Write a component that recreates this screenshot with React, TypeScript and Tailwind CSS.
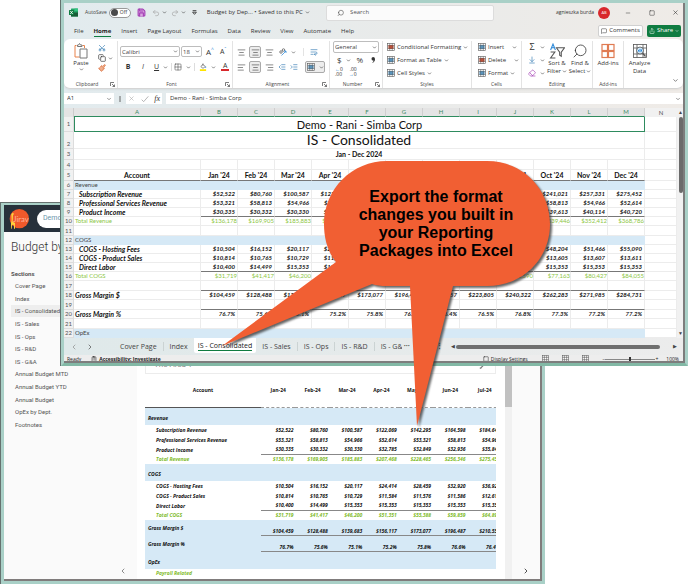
import * as React from "react"
import {
  AlignCenter, AlignLeft, AlignRight, ArrowDownToLine, ChevronDown, ChevronLeft, ChevronRight,
  ClipboardList, Copy, Eraser, Grid2x2, IndentDecrease, IndentIncrease, MessageSquare, Minus,
  Paintbrush, Redo2, Save, Scissors, Search, Share, Square, Undo2, WrapText, X,
} from "lucide-react"

const months = ["Jan", "Feb", "Mar", "Apr", "May", "Jun", "Jul", "Aug", "Sep", "Oct", "Nov", "Dec"]

type RowKind = "section" | "item" | "total" | "blank" | "margin"

interface Row {
  kind: RowKind
  label?: string
  values?: string[]
  line?: boolean
}

const money = (list: string) => list.split(" ").map((n) => "$" + n)
const percent = (list: string) => list.split(" ").map((n) => n + "%")

const subscription = money("52,522 80,760 100,587 122,069 142,295 164,598 184,645 201,340 222,180 241,021 257,331 275,452")
const services = money("53,321 58,813 54,966 52,614 53,321 58,813 54,966 52,614 53,321 58,813 54,966 52,614")
const product = money("30,335 30,332 30,330 32,785 32,849 32,936 35,843 38,120 38,411 39,613 40,114 40,720")
const revenue = money("136,178 169,905 185,883 207,468 228,465 256,346 275,454 292,074 313,912 339,446 352,412 368,786")
const hosting = money("10,504 16,152 20,117 24,414 28,459 32,920 36,929 40,268 44,436 48,204 51,466 55,090")
const productSales = money("10,814 10,765 10,729 11,584 11,576 11,586 12,615 12,648 13,801 13,605 13,607 13,611")
const labor = money("10,400 14,499 15,353 15,353 15,353 15,353 15,353 15,353 15,353 15,353 15,353 15,353")
const cogs = money("31,719 41,417 46,200 51,351 55,388 59,859 64,897 68,269 73,590 77,163 80,427 84,055")
const margin = money("104,459 128,488 139,683 156,117 173,077 196,487 210,557 223,805 240,322 262,283 271,985 284,731")
const marginPct = percent("76.7 75.6 75.1 75.2 75.8 76.6 76.4 76.5 76.8 77.3 77.2 77.2")

const sheetRows: Row[] = [
  { kind: "section", label: "Revenue" },
  { kind: "item", label: "Subscription Revenue", values: subscription },
  { kind: "item", label: "Professional Services Revenue", values: services },
  { kind: "item", label: "Product Income", values: product, line: true },
  { kind: "total", label: "Total Revenue", values: revenue },
  { kind: "blank" },
  { kind: "section", label: "COGS" },
  { kind: "item", label: "COGS - Hosting Fees", values: hosting },
  { kind: "item", label: "COGS - Product Sales", values: productSales },
  { kind: "item", label: "Direct Labor", values: labor, line: true },
  { kind: "total", label: "Total COGS", values: cogs },
  { kind: "blank", line: true },
  { kind: "margin", label: "Gross Margin $", values: margin },
  { kind: "blank", line: true },
  { kind: "margin", label: "Gross Margin %", values: marginPct },
  { kind: "blank" },
  { kind: "section", label: "OpEx" },
]

const reportRows: Row[] = [
  { kind: "section", label: "Revenue" },
  { kind: "item", label: "Subscription Revenue", values: subscription },
  { kind: "item", label: "Professional Services Revenue", values: services },
  { kind: "item", label: "Product Income", values: product, line: true },
  { kind: "total", label: "Total Revenue", values: revenue },
  { kind: "section", label: "COGS" },
  { kind: "item", label: "COGS - Hosting Fees", values: hosting },
  { kind: "item", label: "COGS - Product Sales", values: productSales },
  { kind: "item", label: "Direct Labor", values: labor, line: true },
  { kind: "total", label: "Total COGS", values: cogs },
  { kind: "margin", label: "Gross Margin $", values: margin, line: true },
  { kind: "margin", label: "Gross Margin %", values: marginPct, line: true },
  { kind: "section", label: "OpEx" },
  { kind: "total", label: "Payroll Related" },
]

const sections = [
  "Cover Page", "Index", "IS - Consolidated", "IS - Sales", "IS - Ops", "IS - R&D", "IS - G&A",
  "Annual Budget MTD", "Annual Budget YTD", "Annual Budget", "OpEx by Dept.", "Footnotes",
]

function Caret() {
  return <ChevronDown className="size-[5px] shrink-0 text-[#444]" strokeWidth={3} />
}

interface IconButtonProps {
  label: string
  children: React.ReactNode
  className?: string
}

function IconButton({ label, children, className = "" }: IconButtonProps) {
  return (
    <button type="button" aria-label={label} className={"flex shrink-0 items-center justify-center " + className}>
      {children}
    </button>
  )
}

interface PickerProps {
  label: string
  value: string
  className: string
}

function Picker({ label, value, className }: PickerProps) {
  return (
    <div className={"relative flex items-center rounded-xs border border-[#bdbdbd] bg-white " + className}>
      <select aria-label={label} className="w-full appearance-none bg-transparent pl-px text-[#444] outline-none">
        <option>{value}</option>
      </select>
      <ChevronDown className="pointer-events-none absolute right-px size-[5px] text-[#444]" strokeWidth={3} />
    </div>
  )
}

interface GroupProps {
  label: string
  className: string
  launcher?: boolean
  children: React.ReactNode
}

function Group({ label, className, launcher, children }: GroupProps) {
  return (
    <div className={"flex shrink-0 flex-col border-r border-[#e3e3e3] " + className}>
      <div className="flex flex-1 overflow-hidden">{children}</div>
      <div className="flex h-2 items-center justify-center text-[5px] leading-[8px] text-[#444]">
        <span className="flex-1 text-center">{label}</span>
        {launcher && (
          <svg viewBox="0 0 10 10" className="mr-0.5 size-[5px]" fill="none" stroke="#444" strokeWidth="1.4">
            <path d="M1 8V1h7M4 4l5 5M9 5v4H5" />
          </svg>
        )}
      </div>
    </div>
  )
}

function GridIcon({ accent, size = "size-2" }: { accent: string; size?: string }) {
  return (
    <svg viewBox="0 0 16 16" className={size + " shrink-0"} fill="none" stroke="#555" strokeWidth="1.2">
      <rect x="1" y="1" width="14" height="14" />
      <rect x="3" y="4" width="10" height="8" fill={accent} stroke="none" />
      <path d="M1 5.5h14M1 10.5h14M5.5 1v14M10.5 1v14" />
    </svg>
  )
}

function ExcelLogo() {
  return (
    <svg viewBox="0 0 18 18" className="size-[9px]">
      <rect x="4" y="1" width="14" height="16" rx="1" fill="#21a366" />
      <rect x="11" y="1" width="7" height="5" fill="#33c481" />
      <rect x="4" y="9" width="14" height="8" fill="#185c37" />
      <rect x="0" y="4" width="10" height="10" rx="1" fill="#107c41" />
      <path d="M2.5 6l5 6M7.5 6l-5 6" stroke="#fff" strokeWidth="1.6" />
    </svg>
  )
}

function TitleBar() {
  return (
    <header className="flex h-[19px] items-center pl-[5px] text-[6px] text-[#333]">
      <ExcelLogo />
      <span id="autosave" className="ml-[7px] text-[5px] text-[#444]">AutoSave</span>
      <button type="button" role="switch" aria-checked="false" aria-labelledby="autosave" className="ml-0.5 flex h-2.5 w-[22px] items-center gap-0.5 rounded-full border border-[#999] bg-white pl-px text-[5px]">
        <span className="size-[7px] rounded-full bg-[#4a4a4a]" />
        Off
      </button>
      <IconButton label="Save" className="ml-1.5"><Save className="size-[9px] fill-[#d9a3e0] text-[#a441b5]" strokeWidth={3} /></IconButton>
      <IconButton label="Undo" className="ml-1.5 gap-0.5 text-[#a5a5a5]"><Undo2 className="size-2" /><Caret /></IconButton>
      <IconButton label="Redo" className="ml-1 gap-0.5 text-[#a5a5a5]"><Redo2 className="size-2" /><Caret /></IconButton>
      <IconButton label="Customize toolbar" className="ml-1.5">
        <svg viewBox="0 0 8 8" className="size-[5px]" fill="none" stroke="#333" strokeWidth="1.4"><path d="M1 1h6M1 3.500h6L4 7z" /></svg>
      </IconButton>
      <button type="button" className="ml-2.5 flex items-center gap-0.5 whitespace-nowrap">
        Budget by Dep... • Saved to this PC <Caret />
      </button>
      <label className="ml-4 flex h-4 flex-1 items-center gap-1.5 rounded-xs border border-[#dcdcdc] bg-[#fbfbfb] pl-2.5">
        <Search className="size-2 -scale-x-100 text-[#555]" />
        <input aria-label="Search" placeholder="Search" className="w-full bg-transparent outline-none placeholder:text-[#555]" />
      </label>
      <div className="ml-14 flex items-center">
        <span className="w-[44px] whitespace-nowrap text-right text-[5px]">agnieszka burda</span>
        <span className="ml-1 flex size-3 items-center justify-center rounded-full bg-[#d8282c] text-[4px] text-white">AB</span>
        <IconButton label="Minimize" className="ml-[15px]"><Minus className="size-1.5" /></IconButton>
        <IconButton label="Maximize" className="ml-[18px]"><Square className="size-1.5" /></IconButton>
        <IconButton label="Close" className="mr-1 ml-[17px]"><X className="size-[7px]" /></IconButton>
      </div>
    </header>
  )
}

function RibbonTabs() {
  const tabs = ["File", "Home", "Insert", "Page Layout", "Formulas", "Data", "Review", "View", "Automate", "Help"]
  return (
    <div className="flex h-[17px] items-center pr-0.5 pl-[10px] text-[6px] text-[#333]">
      <nav className="flex flex-1 items-center gap-[10px] whitespace-nowrap pt-0.5">
        {tabs.map((t) => (
          <a key={t} href="#" className={t === "Home" ? "border-b border-[#107c41] font-bold leading-[9px] text-[#222]" : "border-b border-transparent leading-[9px]"}>
            {t}
          </a>
        ))}
      </nav>
      <button type="button" className="flex h-3 w-[45px] items-center justify-center gap-0.5 rounded-xs border border-[#d0d0d0] bg-white">
        <MessageSquare className="size-1.5" />
        Comments
      </button>
      <button type="button" className="ml-1 flex h-3 w-[34px] items-center justify-center gap-0.5 rounded-xs bg-[#107c41] text-white">
        <Share className="size-1.5" />
        Share
        <ChevronDown className="size-1" strokeWidth={3} />
      </button>
    </div>
  )
}

function Ribbon() {
  return (
    <div className="flex h-[50px] rounded-md border-b border-[#d5d5d5] bg-white pt-0.5 text-[6px] leading-[8px] text-[#333] shadow-xs">
      <Group label="Clipboard" launcher className="w-[54px]">
        <button type="button" className="flex w-[34px] flex-col items-center pt-0.5">
          <svg viewBox="0 0 28 32" className="h-4 w-3.5" fill="none" strokeWidth="2">
            <path d="M5 5H2v23h9M17 5h4v5" stroke="#e8824a" />
            <path d="M7 7V4h2l2-3 2 3h3v3zM12 12h14v18H12z" stroke="#777" fill="#fff" />
          </svg>
          Paste
          <Caret />
        </button>
        <div className="flex flex-col justify-between pb-2 pt-[3px]">
          <IconButton label="Cut" className="self-start"><Scissors className="size-2 -rotate-90 text-[#3a7fb5]" /></IconButton>
          <IconButton label="Copy" className="gap-0.5"><Copy className="size-2" /><Caret /></IconButton>
          <IconButton label="Format painter" className="self-start"><Paintbrush className="size-2 fill-[#f0b08d] text-[#d96b3a]" /></IconButton>
        </div>
      </Group>
      <Group label="Font" launcher className="w-[115px]">
        <div className="flex flex-1 flex-col gap-1.5 pt-[5px] pl-0.5">
          <div className="flex items-center">
            <Picker label="Font name" value="Calibri" className="h-[11px] w-[60px]" />
            <Picker label="Font size" value="18" className="ml-px h-[11px] w-[21px]" />
            <IconButton label="Grow font" className="ml-1 text-[8px]">A<sup className="text-[5px] text-[#2b88d8]">^</sup></IconButton>
            <IconButton label="Shrink font" className="ml-1.5 text-[7px]">A<sup className="text-[5px] text-[#2b88d8]">ˇ</sup></IconButton>
          </div>
          <div className="flex items-center gap-[3px] text-[7px]">
            <button type="button" className="ml-1 w-2 font-bold">B</button>
            <button type="button" className="ml-1 w-2 italic">I</button>
            <IconButton label="Underline" className="ml-1 gap-1"><u>U</u><Caret /></IconButton>
            <IconButton label="Borders" className="gap-1 border-l border-[#ddd] pl-0.5"><Grid2x2 className="size-2" strokeWidth={1.5} /><Caret /></IconButton>
            <IconButton label="Fill colour" className="gap-1 border-l border-[#ddd] pl-1">
              <svg viewBox="0 0 16 18" className="size-2" fill="none" stroke="#555" strokeWidth="1.5">
                <path d="M3 8l5-5 5 5-5 4zM8 1v5" /><path d="M14 8v3" stroke="#2b88d8" strokeWidth="2" />
                <path d="M1 16h14" stroke="#ffe400" strokeWidth="4" />
              </svg>
              <Caret />
            </IconButton>
            <IconButton label="Font colour" className="gap-1 pl-0.5"><span className="w-2 border-b-2 border-[#d8282c] leading-[6px]">A</span><Caret /></IconButton>
          </div>
        </div>
      </Group>
      <Group label="Alignment" launcher className="w-[97px]">
        <div className="flex flex-1 flex-col gap-[3px] pt-[5px] pl-[3px]">
          <div className="flex h-3 items-center gap-[3px]">
            <IconButton label="Top align" className="w-2.5"><AlignCenter className="size-[9px]" strokeWidth={1.5} /></IconButton>
            <IconButton label="Middle align" className="size-3 rounded-xs border border-[#aaa] bg-[#ededed]"><AlignCenter className="size-[9px]" strokeWidth={1.5} /></IconButton>
            <IconButton label="Bottom align" className="w-2.5"><AlignCenter className="size-[9px]" strokeWidth={1.5} /></IconButton>
            <IconButton label="Orientation" className="gap-1 pl-0.5">
              <svg viewBox="0 0 16 16" className="size-2" fill="none" stroke="#555" strokeWidth="1.5">
                <circle cx="4" cy="8" r="2.500" /><circle cx="9" cy="4" r="2.500" />
                <path d="M5 15l9-9M14 10V6h-4" stroke="#2b88d8" />
              </svg>
              <Caret />
            </IconButton>
            <IconButton label="Wrap text" className="ml-1 border-l border-[#e3e3e3] pl-1.5"><WrapText className="size-2 text-[#3a7fb5]" /></IconButton>
          </div>
          <div className="flex h-3 items-center gap-[3px]">
            <IconButton label="Align left" className="w-2.5"><AlignLeft className="size-[9px]" strokeWidth={1.5} /></IconButton>
            <IconButton label="Center" className="size-3 rounded-xs border border-[#aaa] bg-[#ededed]"><AlignCenter className="size-[9px]" strokeWidth={1.5} /></IconButton>
            <IconButton label="Align right" className="w-2.5"><AlignRight className="size-[9px]" strokeWidth={1.5} /></IconButton>
            <IconButton label="Decrease indent" className="w-2.5"><IndentDecrease className="size-2 text-[#3a7fb5]" /></IconButton>
            <IconButton label="Increase indent" className="w-2"><IndentIncrease className="size-2 text-[#3a7fb5]" /></IconButton>
            <IconButton label="Merge and center" className="ml-1 h-3 w-5 gap-1 rounded-xs border border-[#aaa] bg-[#ededed]"><GridIcon accent="#5eaee6" /><Caret /></IconButton>
          </div>
        </div>
      </Group>
      <Group label="Number" launcher className="w-[53px]">
        <div className="flex flex-1 flex-col gap-[3px] px-[3px]">
          <Picker label="Number format" value="General" className="h-3" />
          <div className="flex h-2 items-center gap-1 pl-1 text-[8px]">
            <IconButton label="Currency" className="gap-1">$<Caret /></IconButton>
            <button type="button" className="ml-0.5">%</button>
            <IconButton label="Comma style" className="ml-1">
              <svg viewBox="0 0 8 12" className="h-1.5 w-1" fill="#333"><path d="M4 0a4 4 0 0 1 4 4c0 4-2 7-6 8 2-2 3-3 3-5A3.500 3.500 0 0 1 4 0z" /></svg>
            </IconButton>
          </div>
          <div className="flex items-center gap-1.5 pl-0.5 text-[5px] leading-[5px]">
            <button type="button" className="text-left"><span className="text-[#2b88d8]">←</span>0<br />.00</button>
            <button type="button" className="text-right">.00<br /><span className="text-[#2b88d8]">→</span>0</button>
          </div>
        </div>
      </Group>
      <Group label="Styles" className="w-[89px]">
        <div className="flex flex-col gap-[5px] whitespace-nowrap pt-0.5 pl-1">
          <button type="button" className="flex items-center gap-0.5"><GridIcon accent="#e8502f" />Conditional Formatting<Caret /></button>
          <button type="button" className="flex items-center gap-0.5"><GridIcon accent="#5eaee6" />Format as Table<Caret /></button>
          <button type="button" className="flex items-center gap-0.5"><GridIcon accent="#5eaee6" />Cell Styles<Caret /></button>
        </div>
      </Group>
      <Group label="Cells" className="w-[50px]">
        <div className="flex flex-col gap-[5px] pt-0.5 pl-1.5">
          <button type="button" className="flex items-center gap-0.5"><GridIcon accent="#5eaee6" />Insert<span className="w-1" /><Caret /></button>
          <button type="button" className="flex items-center gap-0.5"><GridIcon accent="#e8502f" />Delete<span className="w-1" /><Caret /></button>
          <button type="button" className="flex items-center gap-0.5"><GridIcon accent="#5eaee6" />Format<Caret /></button>
        </div>
      </Group>
      <Group label="Editing" className="w-[71px]">
        <div className="flex flex-col gap-[5px] pt-0.5 pl-1.5">
          <IconButton label="AutoSum" className="gap-1 text-[9px]"><span className="w-2">Σ</span><Caret /></IconButton>
          <IconButton label="Fill" className="gap-1"><ArrowDownToLine className="size-2 text-[#3a7fb5]" /><Caret /></IconButton>
          <IconButton label="Clear" className="gap-1"><Eraser className="size-2 text-[#a441b5]" /><Caret /></IconButton>
        </div>
        <button type="button" className="flex w-6 shrink-0 flex-col items-center whitespace-nowrap pt-0.5">
          <svg viewBox="0 0 30 30" className="size-4" fill="none" strokeWidth="2">
            <path d="M3 13L7.500 2 12 13M5 9h6" stroke="#2b88d8" />
            <path d="M3 17h8L3 28h9" stroke="#555" />
            <path d="M14 9h15l-6 8v8l-3-2v-6z" stroke="#555" />
          </svg>
          Sort &amp;
          <span className="flex items-center gap-px">Filter<Caret /></span>
        </button>
        <button type="button" className="flex w-[22px] shrink-0 flex-col items-center whitespace-nowrap pt-0.5">
          <Search className="size-4 -scale-x-100" strokeWidth={1.2} />
          Find &amp;
          <span className="flex items-center gap-px">Select<Caret /></span>
        </button>
      </Group>
      <Group label="Add-ins" className="w-[31px]">
        <button type="button" className="flex flex-1 flex-col items-center whitespace-nowrap pt-0.5">
          <svg viewBox="0 0 28 30" className="h-4 w-3.5" fill="none" stroke="#e07b52" strokeWidth="2.4">
            <rect x="2" y="2" width="11" height="12" /><rect x="15" y="2" width="11" height="12" />
            <rect x="2" y="16" width="11" height="12" /><rect x="15" y="16" width="11" height="12" />
          </svg>
          Add-ins
        </button>
      </Group>
      <button type="button" className="flex w-[31px] shrink-0 flex-col items-center pt-0.5">
        <svg viewBox="0 0 28 30" className="h-4 w-3.5" fill="none" stroke="#555" strokeWidth="1.6">
          <rect x="1" y="2" width="26" height="26" />
          <path d="M1 9h26M1 21h26M8 2v26M20 2v26" />
          <circle cx="14" cy="14" r="7" fill="#cfe6f7" />
          <path d="M11 16v-3M14 17v-6M17 16v-4" stroke="#2b88d8" strokeWidth="2" />
          <path d="M19 19l6 7" strokeWidth="2.4" />
        </svg>
        Analyze<br />Data
      </button>
      <div className="flex flex-1 items-end justify-end p-1"><ChevronDown className="size-[7px]" /></div>
    </div>
  )
}

function FormulaBar() {
  return (
    <div className="my-1 flex h-[11px] items-center gap-1 text-[6px] text-[#333]">
      <div className="relative flex h-full w-[50px] items-center bg-white">
        <input aria-label="Name box" defaultValue="A1" className="w-full bg-transparent pl-[3px] outline-none" />
        <ChevronDown className="absolute right-0.5 size-1.5" />
      </div>
      <svg viewBox="0 0 4 12" className="h-1.5 w-1" fill="#444">
        <circle cx="2" cy="2" r="1.500" /><circle cx="2" cy="6" r="1.500" /><circle cx="2" cy="10" r="1.500" />
      </svg>
      <div className="flex h-full w-9 items-center justify-between bg-white px-0.5">
        <X className="size-[7px] text-[#aaa]" />
        <svg viewBox="0 0 12 12" className="size-2" fill="none" stroke="#aaa" strokeWidth="1.3"><path d="M1 7l3 3 7-8" /></svg>
        <span className="font-[Liberation_Serif,serif] text-[8px] italic">fx</span>
      </div>
      <div className="flex h-full flex-1 items-center bg-white pr-0.5">
        <input aria-label="Formula" defaultValue="Demo - Rani - Simba Corp" className="flex-1 bg-transparent pl-1 outline-none" />
        <ChevronDown className="size-1.5" />
      </div>
    </div>
  )
}

const rowHead = "border-r border-b border-[#dcdcdc] bg-[#f1f1f1] text-center font-normal text-[#555]"
const gridCell = "border-r border-b border-[#ececec]"

function SheetRow({ row, number }: { row: Row; number: number }) {
  const filled = row.kind === "section"
  const height = row.kind === "blank" ? "h-2.5" : "h-[9px]"
  const label = {
    section: "pl-px text-[#444]",
    item: "pl-[5px] text-[7px] font-bold italic",
    total: "pl-px text-[#8cc63f]",
    blank: "",
    margin: "pl-px text-[7px] font-bold italic",
  }[row.kind]
  const value = row.kind === "total" ? "text-[#8cc63f]" : "pr-0.5 font-bold italic"
  const bottom = row.line ? "border-r border-b border-r-[#ececec] border-b-[#777]" : gridCell
  return (
    <tr className={height}>
      <th className={rowHead}>{number}</th>
      <td className={(filled ? "border-r border-b border-[#d6e9f6] bg-[#d6e9f6] " : gridCell + " ") + "whitespace-nowrap " + label}>{row.label}</td>
      {months.map((m, i) => (
        <td key={m} className={(filled ? "bg-[#d6e9f6] " : bottom + " ") + "text-right " + value}>{row.values?.[i]}</td>
      ))}
      <td className={gridCell} />
    </tr>
  )
}

function Sheet() {
  return (
    <div className="flex bg-white">
      <div className="min-w-0 flex-1 overflow-hidden">
        <table className="w-full table-fixed border-separate border-spacing-0 font-[Lato,sans-serif] text-[6px] leading-[8px] text-[#111]">
          <colgroup>
            <col className="w-[10px]" />
            <col />
            {months.map((m) => <col key={m} className="w-[37px]" />)}
            <col className="w-8" />
          </colgroup>
          <thead>
            <tr className="h-[9px] bg-[#e4e4e4] text-[#3c8a64]">
              <th className="border-r border-[#ccc]" />
              {"ABCDEFGHIJKLM".split("").map((c) => (
                <th key={c} className="border-r border-b border-r-[#cfcfcf] border-b-[#2e8b5e] font-normal">{c}</th>
              ))}
              <th className="bg-[#f1f1f1] font-normal text-[#555]">N</th>
            </tr>
          </thead>
          <tbody>
            <tr className="h-[15px]">
              <th className={rowHead}>1</th>
              <td colSpan={13} className="border-r border-b border-l border-[#2e8b5e] text-center text-[11px] leading-[13px]">Demo - Rani - Simba Corp</td>
              <td className={gridCell} />
            </tr>
            <tr className="h-[17px]">
              <th className={rowHead + " align-bottom"}>2</th>
              <td colSpan={13} className={gridCell + " text-center text-[14px] leading-[16px]"}>IS - Consolidated</td>
              <td className={gridCell} />
            </tr>
            <tr className="h-[11px]">
              <th className={rowHead}>3</th>
              <td colSpan={13} className={gridCell + " text-center text-[7px] font-bold"}>Jan - Dec 2024</td>
              <td className={gridCell} />
            </tr>
            <tr className="h-2.5">
              <th className={rowHead}>4</th>
              {Array.from({ length: 14 }, (_, i) => <td key={i} className={gridCell} />)}
            </tr>
            <tr className="h-[11px] text-[7px]">
              <th className={rowHead + " text-[6px]"}>5</th>
              <th className="border-r border-b border-r-[#ececec] border-b-[#777]">Account</th>
              {months.map((m) => (
                <th key={m} className="border-r border-b border-r-[#ececec] border-b-[#777] whitespace-nowrap">{m} '24</th>
              ))}
              <td className={gridCell} />
            </tr>
            {sheetRows.map((row, i) => <SheetRow key={i} row={row} number={i + 6} />)}
          </tbody>
        </table>
      </div>
      <div className="flex w-1.5 flex-col items-end bg-[#f1f1f1] text-[5px] leading-[9px] text-[#444]">
        <span>▲</span>
        <span className="h-[76px] w-1 rounded-full bg-[#6b6b6b]" />
        <span className="mt-auto">▼</span>
      </div>
    </div>
  )
}

function SheetTabs() {
  const tab = "border-r border-[#cbd3d3] px-1.5 leading-[9px]"
  return (
    <div className="flex h-[17px] items-center bg-linear-to-r from-[#dfe9ea] to-[#ececec] text-[7px] text-[#444]">
      <IconButton label="Previous sheet" className="ml-1.5"><ChevronLeft className="size-2 text-[#888]" /></IconButton>
      <IconButton label="Next sheet" className="ml-2"><ChevronRight className="size-2" /></IconButton>
      <nav className="ml-5 flex items-center self-stretch whitespace-nowrap">
        <a href="#" className={tab}>Cover Page</a>
        <a href="#" className="px-1.5 leading-[9px]">Index</a>
        <a href="#" className="flex h-[15px] items-center self-start rounded-b-xs bg-white px-1 text-[#222]"><span className="border-b border-[#107c41] leading-[9px]">IS - Consolidated</span></a>
        <a href="#" className={tab}>IS - Sales</a>
        <a href="#" className={tab}>IS - Ops</a>
        <a href="#" className={tab}>IS - R&amp;D</a>
        <a href="#" className="w-[27px] overflow-hidden pl-1.5 leading-[9px]">IS - G&amp;A</a>
      </nav>
      <span className="ml-0.5 font-bold">···</span>
      <span className="ml-auto font-bold">⋮</span>
      <div className="ml-2 flex w-[232px] items-center gap-px text-[5px]">
        <span>◀</span>
        <span className="h-1 w-[204px] rounded-full bg-[#6f6f6f]" />
        <span className="ml-auto mr-1.5">▶</span>
      </div>
    </div>
  )
}

function StatusBar() {
  return (
    <div className="flex h-1.5 items-start overflow-hidden bg-[#ededed] text-[5px] leading-[9px] text-[#222]">
      <span className="ml-[3px]">Ready</span>
      <ClipboardList className="mt-px ml-2.5 size-1.5" />
      <span className="ml-0.5 flex-1 font-bold">Accessibility: Investigate</span>
      <Square className="mt-px mr-0.5 size-1.5" />
      <span>Display Settings</span>
      <GridIcon accent="#fff" size="ml-3.5 size-[7px]" />
      <GridIcon accent="#fff" size="ml-[13px] size-[7px]" />
      <GridIcon accent="#fff" size="ml-[13px] size-[7px]" />
      <span className="ml-3.5">−</span>
      <span className="mt-1 h-px w-[50px] bg-[#888]"><span className="mx-auto -mt-0.5 block h-1 w-0.5 bg-[#333]" /></span>
      <span className="mr-2">+</span>
      <span className="mr-1">100%</span>
    </div>
  )
}

function ExcelWindow() {
  return (
    <main className="relative ml-[60px] border-l border-[#66716f] font-[Open_Sans,sans-serif]">
      <div className="border-[3px] border-[#a9d0c7] border-b-[#82b8a5]">
        <div className="border-r-2 border-b-2 border-[#7d7d7d] bg-linear-to-r from-[#e2ebee] to-[#efebe7]">
          <TitleBar />
          <RibbonTabs />
          <Ribbon />
          <FormulaBar />
          <Sheet />
          <SheetTabs />
          <StatusBar />
        </div>
      </div>
    </main>
  )
}

function ReportRow({ row }: { row: Row }) {
  const banded = row.kind === "section" || row.kind === "margin"
  const height = { section: "h-[17px]", item: "h-2.5", total: "h-[9px]", blank: "h-2.5", margin: "h-[16px]" }[row.kind]
  const line = row.line ? " border-b border-[#888]" : ""
  return (
    <tr className={height + (banded ? " bg-[#d6e9f6]" : "") + (row.kind === "total" ? " text-[#7fbb2c]" : "")}>
      <td className={"whitespace-nowrap " + (banded ? "pl-[3px]" : "pl-[11px]") + (row.kind === "section" ? " pt-1" : "")}>{row.label}</td>
      {months.slice(0, 7).map((m, i) => (
        <td key={m} className={"pr-0.5 text-right" + (row.kind === "margin" ? " align-bottom" : "") + line}>{row.values?.[i]}</td>
      ))}
    </tr>
  )
}

function JiravLogo() {
  return (
    <svg viewBox="0 0 60 60" className="size-5">
      <circle cx="31" cy="29" r="29" fill="#f0592b" />
      <text x="13" y="38" fontSize="23" fill="#ffb49a" fontFamily="Lato, sans-serif">Jirav</text>
      <path d="M7 15l5-4 3 4-3 3-1 20 7 4v17h-3V48l-6-1-1 12H6V42l2-8z" fill="#ffd23c" />
    </svg>
  )
}

function ReportWindow() {
  return (
    <section className="absolute top-[202px] right-[143px] bottom-0 left-0 flex flex-col border-t border-l border-[#66716f] font-[Roboto,sans-serif]">
      <div className="flex min-h-0 flex-1 flex-col border-[3px] border-t-2 border-[#a9d0c7]">
        <div className="flex min-h-0 flex-1 flex-col border-r-2 border-b-2 border-[#807c7c] bg-[#fafafa]">
          <header className="flex h-[27px] shrink-0 items-center gap-2 bg-[#27313b] pl-[5px]">
            <JiravLogo />
            <button type="button" className="h-[18px] w-24 rounded-full bg-white pl-1.5 text-left text-[7px] text-[#6c96ab]">Demo</button>
          </header>
          <div className="flex min-h-0 flex-1">
            <aside className="flex w-[133px] shrink-0 flex-col text-[6px] text-[#555]">
              <h1 className="mt-2 pl-[7px] text-[12px] leading-[14px] font-light text-[#333]">Budget by Dept.</h1>
              <h2 className="mt-4 pl-[7px] font-bold leading-[8px]">Sections</h2>
              <nav className="mt-0.5 flex h-[151px] flex-col justify-between">
                {sections.map((s) => (
                  <a key={s} href="#" className={"ml-[7px] h-3 pl-1 leading-[12px] " + (s === "IS - Consolidated" ? "bg-[#eeeeee]" : "")}>{s}</a>
                ))}
              </nav>
              <IconButton label="Previous page" className="mt-auto mr-2.5 mb-1 self-end"><ChevronLeft className="size-2" /></IconButton>
            </aside>
            <div className="flex min-w-0 flex-1 bg-white pl-2">
              <div className="mr-[9px] min-w-0 flex-1 overflow-hidden">
                <div className="mt-[123px] flex h-[19px] items-center justify-between border border-[#ececec] px-2 text-[8px] leading-[10px] text-[#888]">
                  The Area 1
                  <svg viewBox="0 0 10 10" className="size-2" fill="none" stroke="#777" strokeWidth="1.500"><path d="M2 9l7-7M1 9h2" /></svg>
                </div>
                <table className="w-[calc(100%+6px)] table-fixed border-separate border-spacing-0 font-[Open_Sans,sans-serif] text-[5px] leading-[7px] font-bold text-[#111] italic">
                  <colgroup>
                    <col className="w-[116px]" />
                    {months.slice(0, 7).map((m) => <col key={m} />)}
                  </colgroup>
                  <thead>
                    <tr className="h-[34px] not-italic">
                      <th className="border-b border-[#555]">Account</th>
                      {months.slice(0, 7).map((m) => <th key={m} className="border-b border-dashed border-[#999]">{m}-24</th>)}
                    </tr>
                  </thead>
                  <tbody>
                    {reportRows.map((row, i) => <ReportRow key={i} row={row} />)}
                  </tbody>
                </table>
              </div>
              <div className="w-[7px] bg-[#f1f1f1] pt-[115px]"><div className="h-[60px] bg-[#c1c1c1]" /></div>
            </div>
            <div className="flex w-7 shrink-0 items-end justify-center bg-[#fafafa] pb-1">
              <IconButton label="Next page"><ChevronRight className="size-2" /></IconButton>
            </div>
          </div>
        </div>
      </div>
    </section>
  )
}

function Callout() {
  return (
    <div className="pointer-events-none absolute top-[161px] left-[222px] h-[270px] w-[334px]">
      <svg viewBox="0 0 334 270" className="absolute inset-0 drop-shadow-[2px_2px_1px_rgba(50,50,50,0.75)]">
        <path
          d="M165 0H265C301 0 328 28 328 63C328 98 301 125 265 125H231L195 265L188 125H165Q156 125 150 123L0 185L114 101C106 91 102 78 102 63C102 28 130 0 165 0Z"
          fill="#f15f33"
        />
      </svg>
      <p className="relative mr-2 ml-[102px] pt-[27px] text-center font-['Liberation_Sans',sans-serif] text-[16px] leading-[18px] font-bold text-black">
        Export the format<br />changes you built in<br />your Reporting<br />Packages into Excel
      </p>
    </div>
  )
}

export default function App() {
  return (
    <div className="relative min-h-screen overflow-hidden bg-white">
      <ReportWindow />
      <ExcelWindow />
      <Callout />
    </div>
  )
}
